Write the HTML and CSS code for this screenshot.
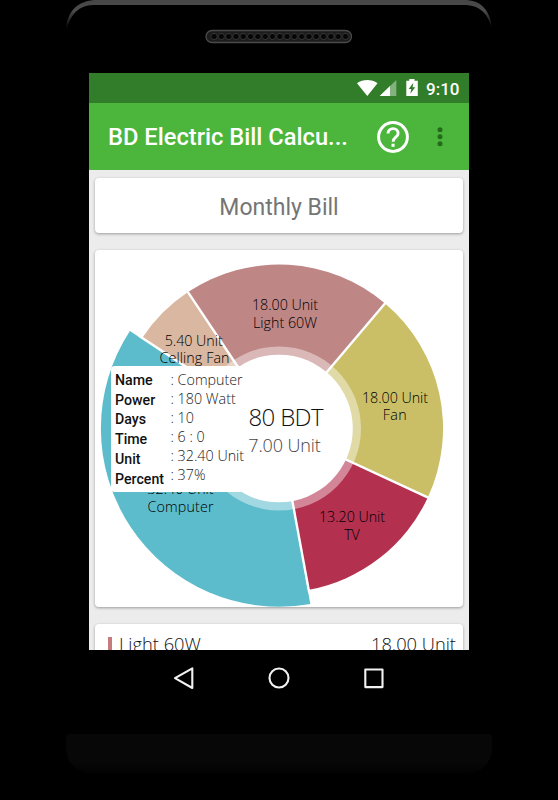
FILE: index.html
```html
<!DOCTYPE html>
<html lang="en">
<head>
    <meta charset="UTF-8">
    <meta name="viewport" content="width=device-width, initial-scale=1.0">
    <title>BD Electric Bill Calculator</title>
    <link rel="stylesheet" href="styles.css">
</head>
<body>
    <div class="phone">
        <svg class="phone-top" width="558" height="73" viewBox="0 0 558 73">
            <defs>
                <linearGradient id="rim" gradientUnits="userSpaceOnUse" x1="0" y1="0" x2="0" y2="30">
                    <stop offset="0" stop-color="#464646"/>
                    <stop offset="0.35" stop-color="#4c4c4c"/>
                    <stop offset="1" stop-color="#000000"/>
                </linearGradient>
                <pattern id="holes" x="210.5" y="31" width="7.3" height="11" patternUnits="userSpaceOnUse">
                    <circle cx="3.6" cy="5.5" r="3.1" fill="#050505" stroke="#3d3d3d" stroke-width="0.8"/>
                </pattern>
            </defs>
            <path d="M66 30C67 10 79 0 97 0H464C481 0 490 10 492 28C487 12 479 5 463 5H93C79 5 71 14 66 30Z" fill="url(#rim)"/>
            <rect x="206" y="30.5" width="145.5" height="12" rx="6" fill="#1c1c1c" stroke="#4a4a4a" stroke-width="1.3"/>
            <rect x="210.5" y="31" width="138.7" height="11" fill="url(#holes)"/>
        </svg>

        <div class="screen">
            <div class="status-bar">
                <svg class="status-icons" width="62" height="20" viewBox="0 0 62 20">
                    <path d="M0 5.3C6 .9 14.5 .9 20.5 5.3L10.3 18Z" fill="#ffffff"/>
                    <path d="M39.3 2V18H22.7Z" fill="#82b27d"/>
                    <path d="M33 8.1V18H22.7Z" fill="#ffffff"/>
                    <path d="M49.3 2.7H52.3V1H57.5V2.7H60.8V18H49.3Z" fill="#ffffff"/>
                    <path d="M56.3 4.7L51.7 11.1H54.3L53.3 15.7L58.3 9.3H55.6Z" fill="#327d29"/>
                </svg>
                <span class="clock">9:10</span>
            </div>

            <div class="app-bar">
                <h1 class="title">BD Electric Bill Calcu...</h1>
                <svg class="help" width="34" height="34" viewBox="0 0 34 34">
                    <circle cx="17" cy="17" r="14.4" fill="none" stroke="#ffffff" stroke-width="3"/>
                    <path d="M12 13.6C12 6.9 22.1 7.1 22.1 13.4C22.1 17.3 17.1 17.2 17.1 21.8" fill="none" stroke="#ffffff" stroke-width="2.9"/>
                    <rect x="15.5" y="23.7" width="3.1" height="3.1" fill="#ffffff"/>
                </svg>
                <svg class="more" width="6" height="22" viewBox="0 0 6 22">
                    <circle cx="3" cy="3.7" r="2.5"/>
                    <circle cx="3" cy="10.7" r="2.5"/>
                    <circle cx="3" cy="17.8" r="2.5"/>
                </svg>
            </div>

            <div class="content">
                <div class="card heading">Monthly Bill</div>

                <div class="card chart">
                    <svg width="368" height="356" viewBox="95 250 368 356">
                        <!-- slices -->
                        <path d="M279 428.5L188 292.1A164 164 0 0 1 385.1 303.4Z" fill="#bf8686"/>
                        <path d="M279 428.5L385.1 303.4A164 164 0 0 1 427.8 497.5Z" fill="#cabf66"/>
                        <path d="M279 428.5L427.8 497.5A164 164 0 0 1 308.9 589.8Z" fill="#b3304f"/>
                        <path d="M279 428.5L142.2 338A164 164 0 0 1 188 292.1Z" fill="#d9b7a1"/>
                        <path d="M279 428.5L310.3 603.9A178.2 178.2 0 0 1 129.9 331Z" fill="#5dbccb"/>
                        <!-- gaps between slices -->
                        <g stroke="#ffffff" stroke-width="2.4">
                            <path d="M279 428.5L387.7 300.3"/>
                            <path d="M279 428.5L431.4 499.2"/>
                            <path d="M279 428.5L309.2 592.4"/>
                            <path d="M279 428.5L139 335.8"/>
                            <path d="M279 428.5L185.8 288.8"/>
                        </g>
                        <circle cx="279" cy="428.5" r="82" fill="#ffffff" fill-opacity="0.42"/>
                        <circle cx="279" cy="428.5" r="73.8" fill="#ffffff"/>
                        <g class="labels">
                            <text x="285" y="310" textLength="66">18.00 Unit</text>
                            <text x="285" y="327.5" textLength="64">Light 60W</text>
                            <text x="395" y="402.5" textLength="66">18.00 Unit</text>
                            <text x="394.7" y="420" textLength="24">Fan</text>
                            <text x="352" y="522" textLength="66">13.20 Unit</text>
                            <text x="352" y="539.5">TV</text>
                            <text x="193.7" y="345.5" textLength="58">5.40 Unit</text>
                            <text x="194.5" y="363" textLength="70">Celling Fan</text>
                            <text x="180.5" y="494" textLength="66">32.40 Unit</text>
                            <text x="180.5" y="511.8" textLength="66">Computer</text>
                        </g>
                        <text class="total" x="286" y="426" textLength="75">80 BDT</text>
                        <text class="units" x="284.5" y="451.8" textLength="72.5">7.00 Unit</text>
                    </svg>

                    <div class="tooltip">
                        <div class="names">
                            <div>Name</div>
                            <div>Power</div>
                            <div>Days</div>
                            <div>Time</div>
                            <div>Unit</div>
                            <div>Percent</div>
                        </div>
                        <div class="values">
                            <div>: Computer</div>
                            <div>: 180 Watt</div>
                            <div>: 10</div>
                            <div>: 6 : 0</div>
                            <div>: 32.40 Unit</div>
                            <div>: 37%</div>
                        </div>
                    </div>
                </div>

                <div class="card list">
                    <div class="item">
                        <span class="swatch"></span>
                        <span class="item-name">Light 60W</span>
                        <span class="item-value">18.00 Unit</span>
                    </div>
                </div>
            </div>
        </div>

        <div class="nav">
            <svg width="24" height="24" viewBox="0 0 24 24"><path d="M3 12.2L20.3 2.3V22Z"/></svg>
            <svg width="24" height="24" viewBox="0 0 24 24"><circle cx="12" cy="12" r="9.5"/></svg>
            <svg width="24" height="24" viewBox="0 0 24 24"><rect x="3.3" y="3.5" width="17.2" height="17.6"/></svg>
        </div>
        <div class="chin"></div>
    </div>
</body>
</html>
```
FILE: styles.css
```css
body {
    margin: 0;
    background: #000000;
    font-family: Roboto, "Open Sans", sans-serif;
}
.phone {
    width: 558px;
    height: 800px;
    overflow: hidden;
    background: #000000;
}
.phone-top {
    display: block;
}
.screen {
    width: 380px;
    height: 577px;
    margin-left: 89px;
    background: #ececec;
    overflow: hidden;
}
.status-bar {
    display: flex;
    align-items: center;
    justify-content: flex-end;
    height: 30px;
    padding-right: 9px;
    background: #327d29;
    color: #ffffff;
}
.status-icons {
    margin-right: 7px;
}
.clock {
    width: 34px;
    height: 30px;
    font-size: 17px;
    font-weight: 500;
    line-height: 32px;
}
.app-bar {
    display: flex;
    align-items: center;
    height: 67px;
    padding-left: 19px;
    background: #4bb53c;
}
.title {
    width: 240px;
    margin: 0;
    font-size: 23.7px;
    font-weight: 500;
    line-height: 30px;
    white-space: nowrap;
    color: #ffffff;
}
.help {
    margin-left: 28px;
}
.more {
    margin-left: 27px;
    fill: #236b1b;
}
.content {
    display: flex;
    flex-direction: column;
    gap: 17px;
    padding: 8px 6px 0;
}
.card {
    flex-shrink: 0;
    background: #ffffff;
    border-radius: 4px;
    box-shadow: 0 1px 3px rgba(0, 0, 0, 0.35);
}
.heading {
    height: 55px;
    line-height: 60px;
    font-size: 23px;
    text-align: center;
    color: #757575;
}
.chart {
    position: relative;
    height: 356.5px;
}
.chart svg {
    display: block;
    overflow: visible;
}
.labels {
    font-family: "Open Sans", sans-serif;
    font-size: 14.3px;
    font-weight: 300;
    text-anchor: middle;
    fill: #000000;
}
.total {
    font-family: "Open Sans", sans-serif;
    font-size: 24px;
    font-weight: 300;
    text-anchor: middle;
    fill: #111111;
}
.units {
    font-family: "Open Sans", sans-serif;
    font-size: 18px;
    font-weight: 300;
    text-anchor: middle;
    fill: #444444;
}
.tooltip {
    position: absolute;
    left: 16px;
    top: 115.5px;
    display: flex;
    width: 137px;
    height: 126px;
    background: #ffffff;
    border-radius: 4px;
}
.names {
    width: 55.5px;
    padding: 5.3px 0 0 4px;
    font-size: 14.2px;
    font-weight: 500;
    line-height: 19.8px;
    color: #111111;
}
.values {
    padding-top: 4px;
    font-family: "Open Sans", sans-serif;
    font-size: 14.3px;
    font-weight: 300;
    line-height: 19px;
    white-space: nowrap;
    color: #222222;
}
.list {
    height: 100px;
}
.item {
    display: flex;
    padding: 6px 7px 0 13px;
    font-family: "Open Sans", sans-serif;
    font-size: 18.3px;
    font-weight: 300;
    line-height: 28px;
    color: #111111;
}
.swatch {
    width: 4px;
    height: 28px;
    margin: 7px 7px 0 0;
    background: #c67b7d;
}
.item-value {
    margin-left: auto;
}
.nav {
    display: flex;
    justify-content: center;
    gap: 71px;
    padding-top: 16px;
    height: 68px;
}
.nav svg {
    fill: none;
    stroke: #f2f2f2;
    stroke-width: 2.1;
    stroke-linejoin: round;
}
.chin {
    width: 426px;
    height: 40px;
    margin: 0 auto;
    background: linear-gradient(#070707 70%, #020202);
    border-radius: 4px 4px 26px 26px;
}
```
